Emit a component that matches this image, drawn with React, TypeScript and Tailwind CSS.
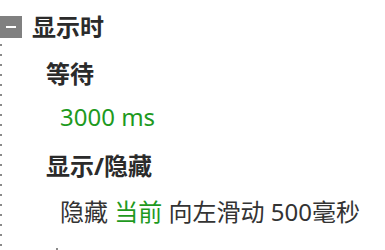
export default function App() {
  return (
    <div
      className="h-[250px] w-[385px] overflow-hidden bg-white pt-4 text-[24px] text-[#333]"
      style={{ fontFamily: '"Noto Sans", "Noto Sans CJK SC", sans-serif' }}
    >
      {/* group header */}
      <div className="flex h-[22px] items-center gap-[10px]">
        <div className="flex h-[22px] w-[22px] items-center justify-center bg-[#808080]">
          <div className="h-[2px] w-[10px] bg-white" />
        </div>
        <span className="font-bold leading-[32px] text-[#2b2b2b]">显示时</span>
      </div>

      <div className="flex h-full">
        {/* tree guide */}
        <div className="mt-[6px] w-[2px] shrink-0 bg-[linear-gradient(#8a8a8a_2px,transparent_2px)] bg-[length:2px_10px]" />

        <div className="flex flex-col">
          <div className="ml-[44px] mt-[20px] font-bold leading-[32px] text-[#2b2b2b]">等待</div>
          <div className="ml-[58px] mt-[11px] leading-[32px] text-[#1e9a1e]">3000 ms</div>
          <div className="ml-[44px] mt-[17px] font-bold leading-[32px] text-[#2b2b2b]">显示/隐藏</div>
          <div className="ml-[58px] mt-[14px] leading-[32px]">
            隐藏 <span className="text-[#1e9a1e]">当前</span> 向左滑动 500毫秒
          </div>
          <div className="ml-[54px] mt-[20px] h-[2px] w-[2px] bg-[#8a8a8a]" />
        </div>
      </div>
    </div>
  );
}
